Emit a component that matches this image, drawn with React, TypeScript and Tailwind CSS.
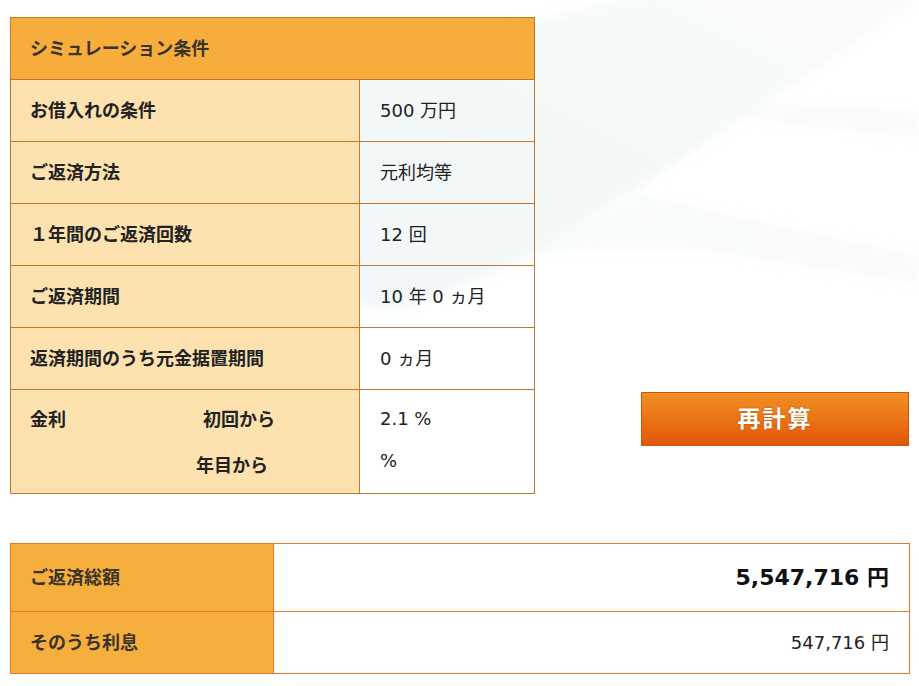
import React from "react";

const font = { fontFamily: '"DejaVu Sans", "Noto Sans CJK JP", sans-serif' };

function Row({ label, value }: { label: string; value: string }) {
  return (
    <div className="flex h-[62px]">
      <div className="w-[349px] h-full flex items-center pl-[19px] bg-[#fde1ae] border-r border-b border-[#c4772c] text-[18px] font-bold text-[#222]">
        {label}
      </div>
      <div className="w-[175px] h-full flex items-center pl-[20px] border-r border-b border-[#c4772c] text-[18px] text-[#222]">
        {value}
      </div>
    </div>
  );
}

export default function App() {
  return (
    <div className="relative w-[919px] h-[686px] overflow-hidden bg-white" style={font}>
      <svg className="absolute inset-0 pointer-events-none" width="919" height="686" viewBox="0 0 919 686">
        <defs>
          <filter id="blur" x="-20%" y="-20%" width="140%" height="140%">
            <feGaussianBlur stdDeviation="5" />
          </filter>
          <linearGradient id="g1" x1="0" y1="1" x2="1" y2="0">
            <stop offset="0" stopColor="#e8f2f8" />
            <stop offset="0.5" stopColor="#ecf5f1" />
            <stop offset="1" stopColor="#f6f9f6" />
          </linearGradient>
          <linearGradient id="g2" x1="0" y1="0" x2="1" y2="0">
            <stop offset="0" stopColor="#f3f8fa" />
            <stop offset="1" stopColor="#f6f9f7" />
          </linearGradient>
        </defs>
        <polygon points="300,300 300,80 660,-10 919,-10 919,0 540,253 400,310" fill="url(#g1)" opacity="0.6" filter="url(#blur)" />
        <polygon points="540,250 640,195 919,255 919,285 700,250" fill="url(#g2)" opacity="0.6" filter="url(#blur)" />
        <polygon points="700,100 919,110 919,140 760,120" fill="#f7f9f5" opacity="0.6" filter="url(#blur)" />
      </svg>

      <div className="relative flex flex-col pt-[17px] px-[10px]">
        <div className="flex">
          <div className="w-[525px] border-t border-l border-[#c4772c]">
            <div className="h-[62px] flex items-center pl-[19px] bg-[#f6ad3c] border-r border-b border-[#c4772c] text-[18px] font-bold text-[#3a3328]">
              シミュレーション条件
            </div>
            <Row label="お借入れの条件" value="500 万円" />
            <Row label="ご返済方法" value="元利均等" />
            <Row label="１年間のご返済回数" value="12 回" />
            <Row label="ご返済期間" value="10 年 0 ヵ月" />
            <Row label="返済期間のうち元金据置期間" value="0 ヵ月" />
            <div className="flex h-[104px]">
              <div className="w-[349px] h-full flex pl-[19px] pt-[17px] bg-[#fde1ae] border-r border-b border-[#c4772c] text-[18px] font-bold text-[#222]">
                <div className="w-[166px] leading-[26px]">金利</div>
                <div className="flex flex-col leading-[26px]">
                  <span className="pl-[7px]">初回から</span>
                  <span className="mt-[20px]">年目から</span>
                </div>
              </div>
              <div className="w-[175px] h-full flex flex-col pl-[20px] pt-[16px] border-r border-b border-[#c4772c] text-[18px] text-[#222] leading-[26px]">
                <span>2.1 %</span>
                <span className="mt-[16px]">%</span>
              </div>
            </div>
          </div>
          <div className="flex-1 flex flex-col justify-end items-end pb-[48px]">
            <button
              className="w-[268px] h-[54px] flex items-center justify-center border border-[#c9560c] bg-gradient-to-b from-[#f28f22] to-[#e2560a] text-white text-[23px] font-bold tracking-[2px]"
              style={{ textShadow: "0 0 2px rgba(150,60,0,0.6)" }}
            >
              再計算
            </button>
          </div>
        </div>

        <div className="mt-[49px] w-[900px] border-t border-l border-[#e3782a]">
          <div className="flex h-[68px]">
            <div className="w-[263px] h-full flex items-center pl-[19px] bg-[#f6ae3d] border-r border-b border-[#e3782a] text-[18px] font-bold text-[#3a3328]">
              ご返済総額
            </div>
            <div className="flex-1 h-full flex items-center justify-end pr-[20px] bg-white border-r border-b border-[#e3782a] text-[22px] font-bold text-[#111]">
              5,547,716 円
            </div>
          </div>
          <div className="flex h-[62px]">
            <div className="w-[263px] h-full flex items-center pl-[19px] bg-[#f6ae3d] border-r border-b border-[#e3782a] text-[18px] font-bold text-[#3a3328]">
              そのうち利息
            </div>
            <div className="flex-1 h-full flex items-center justify-end pr-[20px] bg-white border-r border-b border-[#e3782a] text-[18px] text-[#222]">
              547,716 円
            </div>
          </div>
        </div>
      </div>
    </div>
  );
}
